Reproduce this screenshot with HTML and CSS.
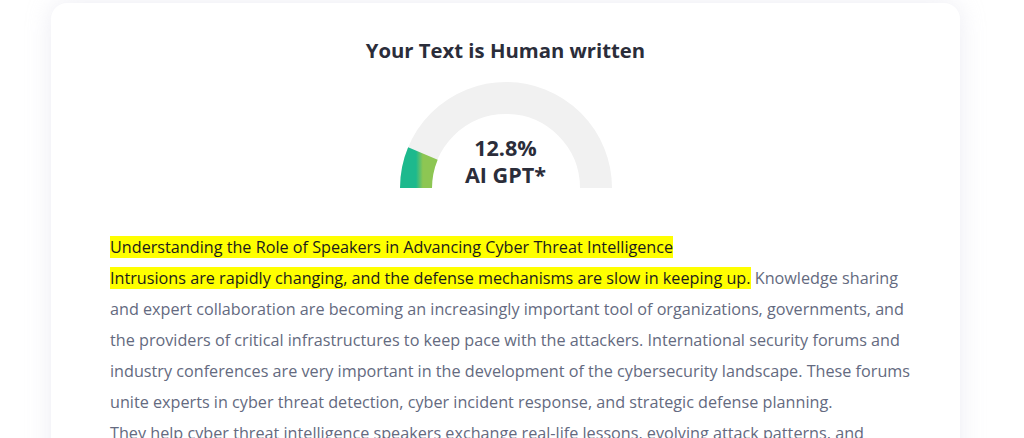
FILE: index.html
```html
<!DOCTYPE html>
<html lang="en">
<head>
<meta charset="utf-8">
<title>AI Detector Result</title>
<link rel="stylesheet" href="styles.css">
</head>
<body>
<div class="page">
  <section class="card">
    <h2 class="result-title">Your Text is Human written</h2>
    <div class="gauge">
      <svg class="gauge-svg" width="214" height="108" viewBox="0 0 214 108">
        <defs>
          <linearGradient id="g" x1="0" y1="0" x2="1" y2="0">
            <stop offset="0" stop-color="#1db98d"/>
            <stop offset="1" stop-color="#8dc653"/>
          </linearGradient>
        </defs>
        <path d="M 17 107 A 90 90 0 0 1 197 107" fill="none" stroke="#f1f1f1" stroke-width="32"/>
        <path d="M 17 107 A 90 90 0 0 1 23.9 72.5" fill="none" stroke="url(#g)" stroke-width="32"/>
      </svg>
      <div class="gauge-label">
        <span class="pct">12.8%</span>
        <span class="kind">AI GPT*</span>
      </div>
    </div>
    <p class="analysed">
      <mark class="hl">Understanding the Role of Speakers in Advancing Cyber Threat Intelligence</mark><br>
      <mark class="hl">Intrusions are rapidly changing, and the defense mechanisms are slow in keeping up.</mark> Knowledge sharing and expert collaboration are becoming an increasingly important tool of organizations, governments, and the providers of critical infrastructures to keep pace with the attackers. International security forums and industry conferences are very important in the development of the cybersecurity landscape. These forums unite experts in cyber threat detection, cyber incident response, and strategic defense planning.<br>
      They help cyber threat intelligence speakers exchange real-life lessons, evolving attack patterns, and practical defense strategies with their peers.
    </p>
  </section>
</div>
</body>
</html>
```
FILE: styles.css
```css
html, body {
  margin: 0;
  padding: 0;
  background: #ffffff;
}
body {
  font-family: "Open Sans", "Noto Sans", "Liberation Sans", sans-serif;
  overflow: hidden;
}
.page {
  padding: 3px 0 0 51px;
}
.card {
  width: 909px;
  box-sizing: border-box;
  background: #ffffff;
  border-radius: 16px;
  box-shadow: 0 0 24px rgba(200, 200, 220, 0.35);
  padding: 33px 50px 40px 50px;
}
.result-title {
  margin: 0;
  text-align: center;
  font-size: 20.3px;
  font-weight: 700;
  line-height: 28px;
  color: #2b2d3a;
}
.gauge {
  position: relative;
  width: 214px;
  height: 108px;
  margin: 17px auto 0;
}
.gauge-svg {
  display: block;
}
.gauge-label {
  position: absolute;
  left: 0;
  right: 0;
  top: 53px;
  display: flex;
  flex-direction: column;
  align-items: center;
  color: #2b2d3a;
  font-weight: 700;
  font-size: 21.6px;
  line-height: 27px;
}
.analysed {
  margin: 43px -10px 0 0;
  padding-left: 9px;
  font-size: 16.2px;
  line-height: 31px;
  color: #646a80;
}
.hl {
  background: #ffff00;
  color: #1c1c1c;
}
```
